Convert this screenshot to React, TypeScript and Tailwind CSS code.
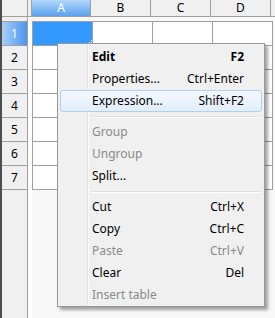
import React from "react";

const cols = ["A", "B", "C", "D"];
const rows = [1, 2, 3, 4, 5, 6, 7];

type Item =
  | { sep: true }
  | { label: string; key?: string; bold?: boolean; off?: boolean; hot?: boolean };

const menu: Item[] = [
  { label: "Edit", key: "F2", bold: true },
  { label: "Properties...", key: "Ctrl+Enter" },
  { label: "Expression...", key: "Shift+F2", hot: true },
  { sep: true },
  { label: "Group", off: true },
  { label: "Ungroup", off: true },
  { label: "Split..." },
  { sep: true },
  { label: "Cut", key: "Ctrl+X" },
  { label: "Copy", key: "Ctrl+C" },
  { label: "Paste", key: "Ctrl+V", off: true },
  { label: "Clear", key: "Del" },
  { label: "Insert table", off: true },
];

const ContextMenu = () => (
  <div className="absolute left-[55px] top-[43px] w-[208px] border border-[#979797] bg-[#f0f0f0] pt-[2px] shadow-[3px_3px_3px_rgba(0,0,0,0.35)]">
    {/* icon gutter */}
    <div className="absolute left-[29px] top-0 bottom-0 w-[2px] border-l border-[#e2e3e3] bg-white/70" />
    {menu.map((it, i) =>
      "sep" in it ? (
        <div key={i} className="relative flex h-[9px] flex-col justify-center pl-[32px] pr-[2px]">
          <div className="h-px bg-[#e0e0e0]" />
          <div className="h-px bg-white" />
        </div>
      ) : (
        <div
          key={i}
          className={
            "relative mx-[2px] flex h-[22px] items-center justify-between rounded-[3px] border pl-[31px] pr-[17px] " +
            (it.hot
              ? "border-[#aecff7] bg-[linear-gradient(#f3f8fe,#e3eefc)]"
              : "border-transparent") +
            (it.off ? " text-[#8a8a8a]" : " text-black") +
            (it.bold ? " font-bold" : "")
          }
        >
          <span>{it.label}</span>
          {it.key && <span>{it.key}</span>}
        </div>
      )
    )}
  </div>
);

export default function App() {
  return (
    <div className="relative flex h-[318px] w-[275px] flex-col overflow-hidden border-l-2 border-[#4e4e4e] bg-[#f8f8f8] font-['Noto_Sans',sans-serif] text-[12px] leading-none">
      {/* column headers */}
      <div className="flex h-[17px] shrink-0 border-b border-[#a0a0a0] bg-[#f0f0f0]">
        <div className="w-[26px] border-r border-[#a0a0a0]" />
        <div className="w-[3px]" />
        {cols.map((c, i) => (
          <div
            key={c}
            className={
              "flex w-[60px] items-center justify-center border-r border-[#a0a0a0] " +
              (i === 0
                ? "border-l bg-[linear-gradient(#b3d7fa,#5aa3f0)] text-white"
                : "text-black")
            }
          >
            {c}
          </div>
        ))}
      </div>

      <div className="flex flex-1">
        {/* row headers */}
        <div className="flex w-[26px] flex-col border-r border-[#a0a0a0] bg-[#f0f0f0] pt-[4px]">
          <div className="border-t border-[#a0a0a0]" />
          {rows.map((r) => (
            <div
              key={r}
              className={
                "flex h-[24px] items-center justify-center border-b border-[#a0a0a0] " +
                (r === 1
                  ? "bg-[linear-gradient(to_right,#a9cff7,#4b96ec)] text-white"
                  : "text-black")
              }
            >
              {r}
            </div>
          ))}
        </div>
        <div className="w-[4px] bg-white" />

        {/* cells */}
        <div className="flex flex-col pt-[4px]">
          <div className="w-[241px] border-t border-[#a0a0a0]" />
          {rows.map((r) => (
            <div key={r} className="flex h-[24px] border-b border-l border-[#a0a0a0] bg-white">
              {cols.map((c, i) => (
                <div
                  key={c}
                  className={
                    "relative w-[60px] border-r border-[#a0a0a0] " +
                    (r === 1 && i === 0 ? "bg-[#3399ff]" : "")
                  }
                >
                  {r === 1 && i === 0 && (
                    <svg className="absolute bottom-0 right-0" width="5" height="5" viewBox="0 0 5 5">
                      <rect x="4" y="0" width="1" height="1" fill="#fff" />
                      <rect x="2" y="2" width="1" height="1" fill="#fff" />
                      <rect x="4" y="2" width="1" height="1" fill="#fff" />
                      <rect x="0" y="4" width="1" height="1" fill="#fff" />
                      <rect x="2" y="4" width="1" height="1" fill="#fff" />
                      <rect x="4" y="4" width="1" height="1" fill="#fff" />
                    </svg>
                  )}
                </div>
              ))}
            </div>
          ))}
        </div>
      </div>

      <ContextMenu />
    </div>
  );
}
